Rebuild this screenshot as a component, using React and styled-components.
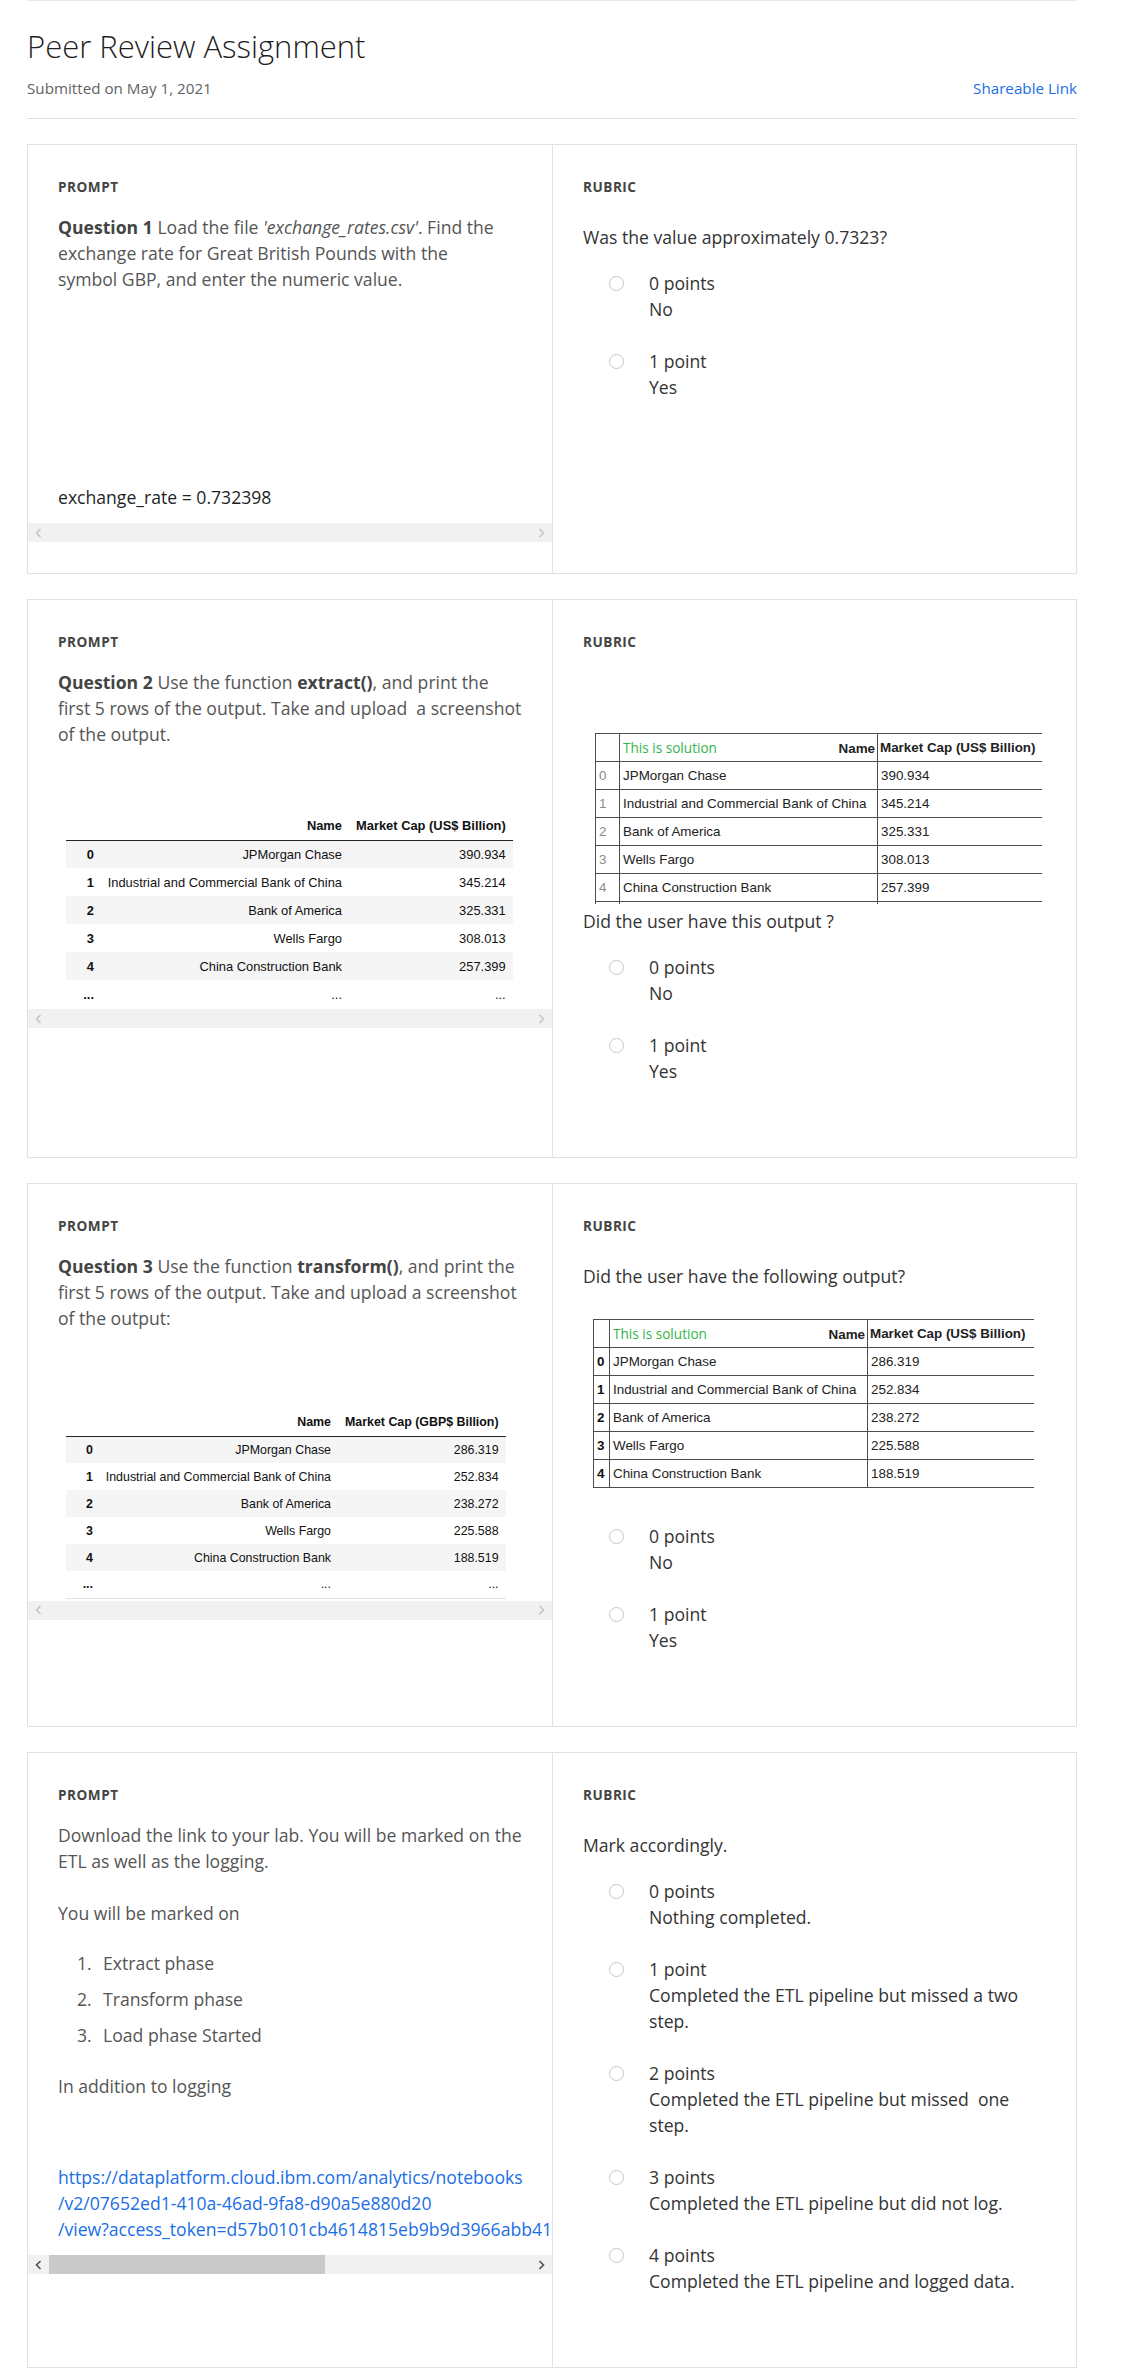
import React from 'react';
import styled, { createGlobalStyle } from 'styled-components';

const GlobalStyle = createGlobalStyle`
    * {
        box-sizing: border-box;
    }
    body {
        margin: 0;
        background: #fff;
        font-family: 'Open Sans', 'Liberation Sans', sans-serif;
        color: #333;
    }
`;

const banks = [
    { name: 'JPMorgan Chase', usd: '390.934', gbp: '286.319' },
    { name: 'Industrial and Commercial Bank of China', usd: '345.214', gbp: '252.834' },
    { name: 'Bank of America', usd: '325.331', gbp: '238.272' },
    { name: 'Wells Fargo', usd: '308.013', gbp: '225.588' },
    { name: 'China Construction Bank', usd: '257.399', gbp: '188.519' },
];

const Chevron = ({ dir }) => (
    <svg width='7' height='10' viewBox='0 0 7 10'>
        <polyline
            points={dir === 'left' ? '5.5,1 1.5,5 5.5,9' : '1.5,1 5.5,5 1.5,9'}
            fill='none'
            stroke='currentColor'
            strokeWidth='1.6'
        />
    </svg>
);

const FakeScrollbar = ({ active }) => (
    <ScrollTrack>
        <ArrowBox $active={active}>
            <Chevron dir='left' />
        </ArrowBox>
        {active && <Thumb />}
        <TrackSpace />
        <ArrowBox $active={active}>
            <Chevron dir='right' />
        </ArrowBox>
    </ScrollTrack>
);

const DataFrame = ({ field, capLabel, fs, rh, cols, endLine }) => (
    <DfTable $fs={fs} $rh={rh} $endLine={endLine}>
        <colgroup>
            {cols.map((w, i) => (
                <col key={i} style={{ width: w }} />
            ))}
        </colgroup>
        <thead>
            <tr>
                <th />
                <th>Name</th>
                <th>{capLabel}</th>
            </tr>
        </thead>
        <tbody>
            {banks.map((b, i) => (
                <tr key={i}>
                    <th>{i}</th>
                    <td>{b.name}</td>
                    <td>{b[field]}</td>
                </tr>
            ))}
            <tr>
                <th>...</th>
                <td>...</td>
                <td>...</td>
            </tr>
        </tbody>
    </DfTable>
);

const Solution = ({ field, cols, boldIndex, extraRow }) => (
    <SolTable>
        <colgroup>
            {cols.map((w, i) => (
                <col key={i} style={{ width: w }} />
            ))}
        </colgroup>
        <thead>
            <tr>
                <th />
                <th>
                    <HeadSplit>
                        <Green>This is solution</Green>
                        <b>Name</b>
                    </HeadSplit>
                </th>
                <th>Market Cap (US$ Billion)</th>
            </tr>
        </thead>
        <tbody>
            {banks.map((b, i) => (
                <tr key={i}>
                    <IndexCell $bold={boldIndex}>{i}</IndexCell>
                    <td>{b.name}</td>
                    <td>{b[field]}</td>
                </tr>
            ))}
            {extraRow && (
                <tr>
                    <IndexCell />
                    <td />
                    <td />
                </tr>
            )}
        </tbody>
    </SolTable>
);

const Options = ({ items, mt }) => (
    <OptionList $mt={mt}>
        {items.map((o, i) => (
            <Option key={i}>
                <RadioCircle />
                <OptionText>
                    {o.points}
                    <br />
                    {o.desc}
                </OptionText>
            </Option>
        ))}
    </OptionList>
);

const yesNo = [
    { points: '0 points', desc: 'No' },
    { points: '1 point', desc: 'Yes' },
];

const etlOptions = [
    { points: '0 points', desc: 'Nothing completed.' },
    {
        points: '1 point',
        desc: (
            <>
                Completed the ETL pipeline but missed a two
                <br />
                step.
            </>
        ),
    },
    {
        points: '2 points',
        desc: (
            <>
                Completed the ETL pipeline but missed{'\u00a0'} one
                <br />
                step.
            </>
        ),
    },
    { points: '3 points', desc: 'Completed the ETL pipeline but did not log.' },
    { points: '4 points', desc: 'Completed the ETL pipeline and logged data.' },
];

const App = () => {
    return (
        <>
            <GlobalStyle />
            <Page>
                <Header>
                    <Title>Peer Review Assignment</Title>
                    <Meta>
                        <span>Submitted on May 1, 2021</span>
                        <LinkText href='#'>Shareable Link</LinkText>
                    </Meta>
                </Header>

                <CardList>
                    {/* question 1 */}
                    <Card>
                        <PromptColumn>
                            <SectionLabel>Prompt</SectionLabel>
                            <ScrollArea $pb={13}>
                                <PromptText>
                                    <Strong>Question 1</Strong> Load the file{' '}
                                    <em>'exchange_rates.csv'</em>. Find the
                                    <br />
                                    exchange rate for Great British Pounds with the
                                    <br />
                                    symbol GBP, and enter the numeric value.
                                </PromptText>
                                <PromptText $mt={192} $dark>
                                    exchange_rate = 0.732398
                                </PromptText>
                            </ScrollArea>
                            <FakeScrollbar />
                        </PromptColumn>
                        <RubricColumn>
                            <SectionLabel>Rubric</SectionLabel>
                            <RubricText $mt={27}>
                                Was the value approximately 0.7323?
                            </RubricText>
                            <Options items={yesNo} />
                        </RubricColumn>
                    </Card>

                    {/* question 2 */}
                    <Card>
                        <PromptColumn>
                            <SectionLabel>Prompt</SectionLabel>
                            <ScrollArea $pb={1}>
                                <PromptText>
                                    <Strong>Question 2</Strong> Use the function{' '}
                                    <Strong>extract()</Strong>, and print the
                                    <br />
                                    first 5 rows of the output. Take and upload{'\u00a0'} a
                                    screenshot
                                    <br />
                                    of the output.
                                </PromptText>
                                <TableSpacer $mt={65}>
                                    <DataFrame
                                        field='usd'
                                        capLabel='Market Cap (US$ Billion)'
                                        fs={12.9}
                                        rh={28}
                                        cols={[34, 249, 163]}
                                    />
                                </TableSpacer>
                            </ScrollArea>
                            <FakeScrollbar />
                        </PromptColumn>
                        <RubricColumn>
                            <SectionLabel>Rubric</SectionLabel>
                            <SolutionWrap $mt={81} $ml={12} $w={447} $clip={171}>
                                <Solution field='usd' cols={[24, 258, 165]} extraRow />
                            </SolutionWrap>
                            <RubricText $mt={4}>Did the user have this output ?</RubricText>
                            <Options items={yesNo} />
                        </RubricColumn>
                    </Card>

                    {/* question 3 */}
                    <Card>
                        <PromptColumn>
                            <SectionLabel>Prompt</SectionLabel>
                            <ScrollArea $pb={2}>
                                <PromptText>
                                    <Strong>Question 3</Strong> Use the function{' '}
                                    <Strong>transform()</Strong>, and print the
                                    <br />
                                    first 5 rows of the output. Take and upload a screenshot
                                    <br />
                                    of the output:
                                </PromptText>
                                <TableSpacer $mt={78}>
                                    <DataFrame
                                        field='gbp'
                                        capLabel='Market Cap (GBP$ Billion)'
                                        fs={12.4}
                                        rh={27}
                                        cols={[33, 239, 167]}
                                        endLine
                                    />
                                </TableSpacer>
                            </ScrollArea>
                            <FakeScrollbar />
                        </PromptColumn>
                        <RubricColumn>
                            <SectionLabel>Rubric</SectionLabel>
                            <RubricText $mt={27}>
                                Did the user have the following output?
                            </RubricText>
                            <SolutionWrap $mt={30} $ml={10} $w={441}>
                                <Solution field='gbp' cols={[16, 258, 167]} boldIndex />
                            </SolutionWrap>
                            <Options items={yesNo} mt={35} />
                        </RubricColumn>
                    </Card>

                    {/* final lab */}
                    <Card>
                        <PromptColumn>
                            <SectionLabel>Prompt</SectionLabel>
                            <ScrollArea $pb={13}>
                                <PromptText>
                                    Download the link to your lab. You will be marked on the
                                    <br />
                                    ETL as well as the logging.
                                </PromptText>
                                <PromptText $mt={26}>You will be marked on</PromptText>
                                <Steps>
                                    <Step>
                                        <StepNum>1.</StepNum>Extract phase
                                    </Step>
                                    <Step>
                                        <StepNum>2.</StepNum>Transform phase
                                    </Step>
                                    <Step>
                                        <StepNum>3.</StepNum>Load phase Started
                                    </Step>
                                </Steps>
                                <PromptText $mt={25}>In addition to logging</PromptText>
                                <UrlBlock href='#'>
                                    https://dataplatform.cloud.ibm.com/analytics/notebooks
                                    <br />
                                    /v2/07652ed1-410a-46ad-9fa8-d90a5e880d20
                                    <br />
                                    /view?access_token=d57b0101cb4614815eb9b9d3966abb41a2f07c1e9d83b5c6a40f9e21d7c3b8a5e6f4
                                </UrlBlock>
                            </ScrollArea>
                            <FakeScrollbar active />
                        </PromptColumn>
                        <RubricColumn>
                            <SectionLabel>Rubric</SectionLabel>
                            <RubricText $mt={27}>Mark accordingly.</RubricText>
                            <Options items={etlOptions} />
                        </RubricColumn>
                    </Card>
                </CardList>
            </Page>
        </>
    );
};

const Page = styled.div`
    width: 1050px;
    margin-left: 27px;
    padding-bottom: 7px;
`;

const Header = styled.header`
    border-top: 1px solid #e8e8e8;
    border-bottom: 1px solid #e1e1e1;
    padding: 25px 0 20px;
`;

const Title = styled.h1`
    margin: 0;
    font-size: 31px;
    font-weight: 300;
    line-height: 40px;
    color: #1f1f1f;
`;

const Meta = styled.div`
    display: flex;
    justify-content: space-between;
    margin-top: 12px;
    font-size: 15.2px;
    line-height: 20px;
    color: #636363;
`;

const LinkText = styled.a`
    color: #1a6ee6;
    text-decoration: none;
`;

const CardList = styled.div`
    display: flex;
    flex-direction: column;
    gap: 25px;
    margin-top: 25px;
`;

const Card = styled.section`
    display: grid;
    grid-template-columns: 525px 1fr;
    border: 1px solid #e1e1e1;
`;

const PromptColumn = styled.div`
    display: flex;
    flex-direction: column;
    min-width: 0;
    padding: 32px 0 31px;
    border-right: 1px solid #e1e1e1;

    & > ${() => SectionLabel} {
        padding: 0 30px;
    }
`;

const RubricColumn = styled.div`
    min-width: 0;
    padding: 32px 30px 30px;
`;

const SectionLabel = styled.div`
    font-size: 13.6px;
    font-weight: 700;
    letter-spacing: 0.5px;
    line-height: 20px;
    color: #444;
    text-transform: uppercase;
`;

const ScrollArea = styled.div`
    overflow: hidden;
    padding: 17px 30px ${(p) => p.$pb || 0}px;
`;

const PromptText = styled.p`
    margin: ${(p) => p.$mt || 0}px 0 0;
    font-size: 17.6px;
    line-height: 26px;
    color: ${(p) => (p.$dark ? '#1f1f1f' : '#555')};
    white-space: nowrap;
`;

const Strong = styled.strong`
    font-weight: 700;
    color: #444;
`;

const TableSpacer = styled.div`
    margin-top: ${(p) => p.$mt}px;
    padding-left: 8px;
`;

const DfTable = styled.table`
    border-collapse: collapse;
    table-layout: fixed;
    font-family: 'Liberation Sans', Arial, sans-serif;
    font-size: ${(p) => p.$fs}px;
    color: #111;

    th,
    td {
        height: ${(p) => p.$rh}px;
        padding: 0 7px;
        text-align: right;
        vertical-align: middle;
        white-space: nowrap;
    }

    td:nth-of-type(1),
    th:nth-of-type(2) {
        padding-left: 2px;
    }

    thead th {
        font-weight: 700;
        border-bottom: 1px solid #222;
    }

    tbody th {
        font-weight: 700;
        padding-right: 6px;
    }

    tbody tr:nth-child(odd) {
        background: #f5f5f5;
    }

    tbody tr:last-child {
        border-bottom: ${(p) => (p.$endLine ? '1px solid #e2e2e2' : 'none')};
    }
`;

const SolutionWrap = styled.div`
    margin: ${(p) => p.$mt}px 0 0 ${(p) => p.$ml}px;
    width: ${(p) => p.$w}px;
    height: ${(p) => (p.$clip ? `${p.$clip}px` : 'auto')};
    overflow: hidden;
`;

const SolTable = styled.table`
    width: 100%;
    border-collapse: collapse;
    table-layout: fixed;
    font-family: 'Liberation Sans', Arial, sans-serif;
    font-size: 13.4px;
    color: #222;

    th,
    td {
        height: 28px;
        padding: 0 3px;
        border: 1px solid #4d4d4d;
        text-align: left;
        white-space: nowrap;
        overflow: hidden;
    }

    thead th {
        font-weight: 700;
        padding: 0 2px;
    }
`;

const HeadSplit = styled.div`
    display: flex;
    justify-content: space-between;
    align-items: baseline;
    padding-left: 1px;
`;

const Green = styled.span`
    font-family: 'Open Sans', sans-serif;
    font-size: 13.6px;
    font-weight: 400;
    color: #34b44a;
`;

const IndexCell = styled.td`
    color: ${(p) => (p.$bold ? '#111' : '#8a8a8a')};
    font-weight: ${(p) => (p.$bold ? 700 : 400)};
`;

const RubricText = styled.p`
    margin: ${(p) => p.$mt || 0}px 0 0;
    font-size: 17.6px;
    line-height: 26px;
    color: #333;
`;

const OptionList = styled.div`
    margin-top: ${(p) => p.$mt ?? 20}px;
    padding: 0 0 17px 26px;
`;

const Option = styled.div`
    display: flex;
    gap: 25px;
    margin-bottom: 26px;
`;

const RadioCircle = styled.span`
    flex: none;
    width: 15px;
    height: 15px;
    margin-top: 6px;
    border: 1px solid #c6c6c6;
    border-radius: 50%;
    background: #fff;
`;

const OptionText = styled.div`
    font-size: 17.6px;
    line-height: 26px;
    color: #333;
    white-space: nowrap;
`;

const Steps = styled.ol`
    list-style: none;
    margin: 24px 0 0;
    padding: 0;
`;

const Step = styled.li`
    display: flex;
    font-size: 17.6px;
    line-height: 26px;
    color: #555;

    & + & {
        margin-top: 10px;
    }
`;

const StepNum = styled.span`
    width: 26px;
    margin-left: 19px;
`;

const UrlBlock = styled.a`
    display: block;
    margin-top: 65px;
    font-size: 17.6px;
    line-height: 26px;
    color: #1a6ee6;
    text-decoration: none;
    white-space: nowrap;
`;

const ScrollTrack = styled.div`
    display: flex;
    align-items: stretch;
    height: 19px;
    background: #f1f1f1;
`;

const ArrowBox = styled.span`
    display: flex;
    align-items: center;
    justify-content: center;
    width: 21px;
    color: ${(p) => (p.$active ? '#505050' : '#c3c3c3')};
`;

const Thumb = styled.span`
    width: 276px;
    background: #c9c9c9;
`;

const TrackSpace = styled.span`
    flex: 1;
`;

export default App;
